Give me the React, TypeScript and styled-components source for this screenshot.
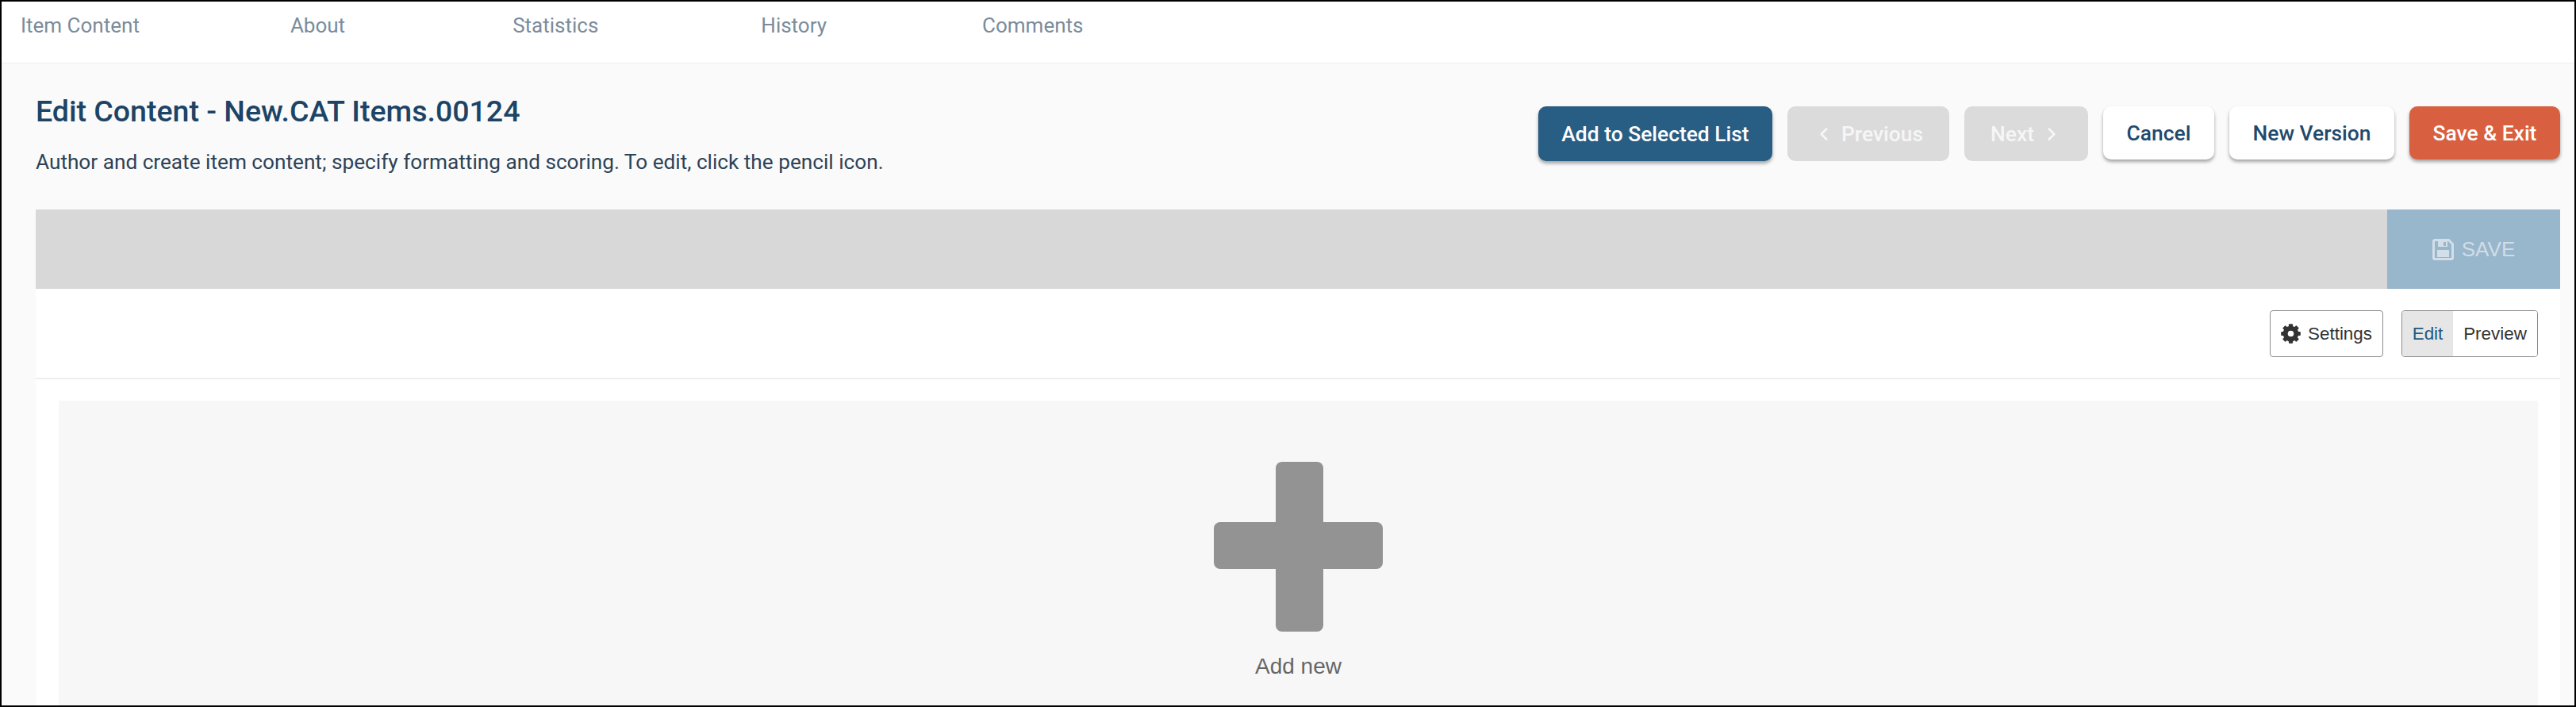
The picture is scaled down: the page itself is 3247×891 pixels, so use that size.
import React from 'react'
import styled, { createGlobalStyle } from 'styled-components'
import { ChevronLeft, ChevronRight } from 'lucide-react'

const GlobalStyle = createGlobalStyle`
html, body {
    margin: 0;
    padding: 0;
    background: #fff;
}
* {
    box-sizing: border-box;
}
`

const tabs = [
    { label: 'Item Content', gap: 190 },
    { label: 'About', gap: 211 },
    { label: 'Statistics', gap: 205 },
    { label: 'History', gap: 196 },
    { label: 'Comments', gap: 0 },
]

const SaveIcon = () => (
    <svg width="27" height="27" viewBox="0 0 27 27">
        <path
            d="M3 1.5h17.5l5 5V24a1.5 1.5 0 0 1-1.5 1.5H3A1.5 1.5 0 0 1 1.5 24V3A1.5 1.5 0 0 1 3 1.5z"
            fill="none"
            stroke="#d3dfe8"
            strokeWidth="3"
        />
        <rect x="6" y="14" width="15" height="9" fill="#d3dfe8" />
        <path d="M7 3h12v7H7z" fill="#d3dfe8" />
        <rect x="14" y="4" width="3" height="5" fill="#98b6cc" />
    </svg>
)

const GearIcon = () => (
    <svg width="25" height="25" viewBox="-12.5 -12.5 25 25" fill="#333">
        <circle r="6.8" fill="none" stroke="#333" strokeWidth="6" />
        {[0, 45, 90, 135, 180, 225, 270, 315].map((angle) => (
            <rect key={angle} x="-2.6" y="-12.3" width="5.2" height="5" rx="1" transform={`rotate(${angle})`} />
        ))}
    </svg>
)

const App = () => {
    return (
        <Page>
            <GlobalStyle />
            <Tabs>
                {tabs.map((tab) => (
                    <Tab key={tab.label} $gap={tab.gap}>{tab.label}</Tab>
                ))}
            </Tabs>

            <Main>
                <Header>
                    <div>
                        <Title>Edit Content - New.CAT Items.00124</Title>
                        <Description>
                            Author and create item content; specify formatting and scoring. To edit, click the pencil icon.
                        </Description>
                    </div>
                    <Actions>
                        <ActionButton $variant="primary" $width={295}>Add to Selected List</ActionButton>
                        <ActionButton $variant="disabled" $width={204}>
                            <ChevronLeft size={26} strokeWidth={2.6} /> Previous
                        </ActionButton>
                        <ActionButton $variant="disabled" $width={156}>
                            Next <ChevronRight size={26} strokeWidth={2.6} />
                        </ActionButton>
                        <ActionButton $variant="plain" $width={140}>Cancel</ActionButton>
                        <ActionButton $variant="plain" $width={208}>New Version</ActionButton>
                        <ActionButton $variant="danger" $width={190}>Save &amp; Exit</ActionButton>
                    </Actions>
                </Header>

                <Panel>
                    <SaveBar>
                        <SaveButton>
                            <SaveIcon /> SAVE
                        </SaveButton>
                    </SaveBar>

                    <Toolbar>
                        <ToolButton>
                            <GearIcon /> Settings
                        </ToolButton>
                        <Toggle>
                            <ToggleItem $active>Edit</ToggleItem>
                            <ToggleItem>Preview</ToggleItem>
                        </Toggle>
                    </Toolbar>

                    <Content>
                        <AddBox>
                            <PlusIcon viewBox="0 0 214 214" fill="#939393">
                                <rect x="78" y="0" width="60" height="214" rx="8" />
                                <rect x="0" y="76" width="213" height="59" rx="8" />
                            </PlusIcon>
                            <AddLabel>Add new</AddLabel>
                        </AddBox>
                    </Content>
                </Panel>
            </Main>
        </Page>
    )
}

export default App

const Page = styled.div`
width: 3247px;
height: 891px;
border: 2px solid #000;
overflow: hidden;
display: flex;
flex-direction: column;
background: #fafafa;
font-family: Roboto, sans-serif;
`

const Tabs = styled.div`
height: 78px;
flex: none;
display: flex;
padding: 15px 0 0 24px;
background: #fff;
border-bottom: 1px solid #eee;
`

const Tab = styled.div<{ $gap: number }>`
margin-right: ${(p) => p.$gap}px;
font-size: 26px;
line-height: 30px;
color: #7a8c9b;
`

const Main = styled.div`
flex: 1;
min-height: 0;
display: flex;
flex-direction: column;
padding: 0 18px 0 43px;
`

const Header = styled.div`
height: 184px;
flex: none;
display: flex;
justify-content: space-between;
padding-top: 38px;
`

const Title = styled.h1`
margin: 0;
font-size: 37.5px;
line-height: 44px;
font-weight: 500;
color: #1c4466;
`

const Description = styled.p`
margin: 26px 0 0;
font-size: 26.2px;
line-height: 32px;
color: #2c4257;
`

const Actions = styled.div`
display: flex;
gap: 19px;
padding-top: 16px;
`

const variants = {
    primary: 'background: #285d84; color: #fff; box-shadow: 0 3px 4px rgba(0, 0, 0, 0.35);',
    disabled: 'background: #dbdbdb; color: #f6f6f6;',
    plain: 'background: #fff; color: #1f4a6e; height: 67px; box-shadow: 0 3px 4px rgba(0, 0, 0, 0.35);',
    danger: 'background: #d86040; color: #fff; height: 67px; box-shadow: 0 3px 4px rgba(0, 0, 0, 0.35);',
}

const ActionButton = styled.button<{ $variant: keyof typeof variants; $width: number }>`
width: ${(p) => p.$width}px;
height: 69px;
padding: 0;
border: none;
border-radius: 10px;
display: flex;
align-items: center;
justify-content: center;
gap: 9px;
font-family: Roboto, sans-serif;
font-size: 26.4px;
font-weight: 500;
${(p) => variants[p.$variant]}
`

const Panel = styled.div`
flex: 1;
min-height: 0;
display: flex;
flex-direction: column;
background: #fff;
`

const SaveBar = styled.div`
height: 100px;
flex: none;
display: flex;
justify-content: flex-end;
background: #d8d8d8;
`

const SaveButton = styled.div`
width: 218px;
display: flex;
align-items: center;
justify-content: center;
gap: 10px;
background: #98b6cc;
color: #d0dde6;
font-family: "Liberation Sans", Arial, sans-serif;
font-size: 26px;
`

const Toolbar = styled.div`
height: 114px;
flex: none;
display: flex;
justify-content: flex-end;
gap: 23px;
padding: 27px 28px 0 0;
border-bottom: 2px solid #eee;
`

const ToolButton = styled.div`
width: 143px;
height: 59px;
display: flex;
align-items: center;
justify-content: center;
gap: 9px;
border: 1px solid #8c8c8c;
border-radius: 4px;
font-family: "Liberation Sans", Arial, sans-serif;
font-size: 22.4px;
color: #333;
`

const Toggle = styled.div`
width: 172px;
height: 59px;
display: flex;
border: 1px solid #8c8c8c;
border-radius: 4px;
overflow: hidden;
`

const ToggleItem = styled.div<{ $active?: boolean }>`
flex: ${(p) => (p.$active ? '0 0 64px' : '1')};
display: flex;
align-items: center;
justify-content: center;
font-family: "Liberation Sans", Arial, sans-serif;
font-size: 22.4px;
background: ${(p) => (p.$active ? '#e6e6e6' : '#fff')};
color: ${(p) => (p.$active ? '#1f5a80' : '#333')};
`

const Content = styled.div`
flex: 1;
min-height: 0;
padding: 27px 28px 0 29px;
`

const AddBox = styled.div`
height: 100%;
display: flex;
flex-direction: column;
align-items: center;
padding-top: 76px;
background: #f7f7f7;
`

const PlusIcon = styled.svg`
width: 214px;
height: 214px;
flex: none;
margin-top: 1px;
`

const AddLabel = styled.div`
margin-top: 28px;
font-family: "Liberation Sans", Arial, sans-serif;
font-size: 28px;
line-height: 32px;
color: #666;
`
